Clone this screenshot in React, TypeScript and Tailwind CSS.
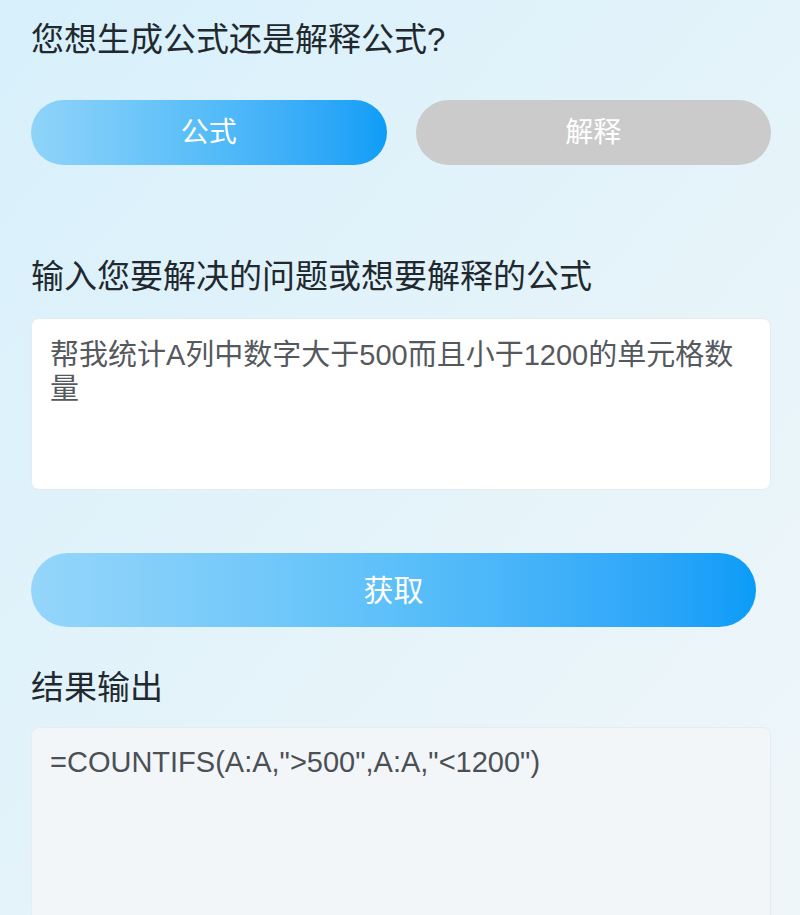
import { useState } from "react";

const font = { fontFamily: '"Liberation Sans", "Noto Sans CJK SC", sans-serif' };

export default function App() {
    const [mode, setMode] = useState<"formula" | "explain">("formula");
    const [prompt, setPrompt] = useState("帮我统计A列中数字大于500而且小于1200的单元格数量");
    const [result] = useState('=COUNTIFS(A:A,">500",A:A,"<1200")');

    return (
        <div
            className="h-[915px] w-full overflow-hidden bg-gradient-to-br from-[#d7f0fb] via-[#e4f3fa] to-[#eff6f9] pl-[31px] pr-[29px] pt-[20px]"
            style={font}
        >
            <div className="text-[33px] leading-[40px] text-[#22292e]">
                您想生成公式还是解释公式?
            </div>

            <div className="mt-[40px] flex gap-[29px]">
                <button
                    onClick={() => setMode("formula")}
                    className={
                        mode === "formula"
                            ? "h-[65px] flex-1 rounded-full bg-gradient-to-r from-[#8fd4f9] via-[#55bcf8] to-[#0c9df7] text-[28px] text-white"
                            : "h-[65px] flex-1 rounded-full bg-[#cbcbcb] text-[28px] text-white"
                    }
                >
                    公式
                </button>
                <button
                    onClick={() => setMode("explain")}
                    className={
                        mode === "explain"
                            ? "h-[65px] flex-1 rounded-full bg-gradient-to-r from-[#8fd4f9] via-[#55bcf8] to-[#0c9df7] text-[28px] text-white"
                            : "h-[65px] flex-1 rounded-full bg-[#cbcbcb] text-[28px] text-white"
                    }
                >
                    解释
                </button>
            </div>

            <div className="mt-[92px] text-[33px] leading-[40px] text-[#22292e]">
                输入您要解决的问题或想要解释的公式
            </div>

            <textarea
                value={prompt}
                onChange={(e) => setPrompt(e.target.value)}
                className="mt-[21px] block h-[172px] w-full resize-none rounded-lg border border-[#e3ecf1] bg-white pl-[18px] pr-[28px] pt-[19px] text-[29px] leading-[34px] text-[#55595d] outline-none"
                style={font}
            />

            <button className="mt-[63px] block h-[74px] w-[725px] rounded-full bg-gradient-to-r from-[#95d6fa] via-[#5cc0f9] to-[#089cf8] text-[30px] text-white">
                获取
            </button>

            <div className="mt-[41px] text-[33px] leading-[40px] text-[#22292e]">
                结果输出
            </div>

            <div className="mt-[19px] h-[260px] rounded-lg border border-[#e6edf2] bg-[#f3f6f9] pl-[18px] pt-[17px] text-[29px] leading-[34px] text-[#4b5055]">
                {result}
            </div>
        </div>
    );
}
